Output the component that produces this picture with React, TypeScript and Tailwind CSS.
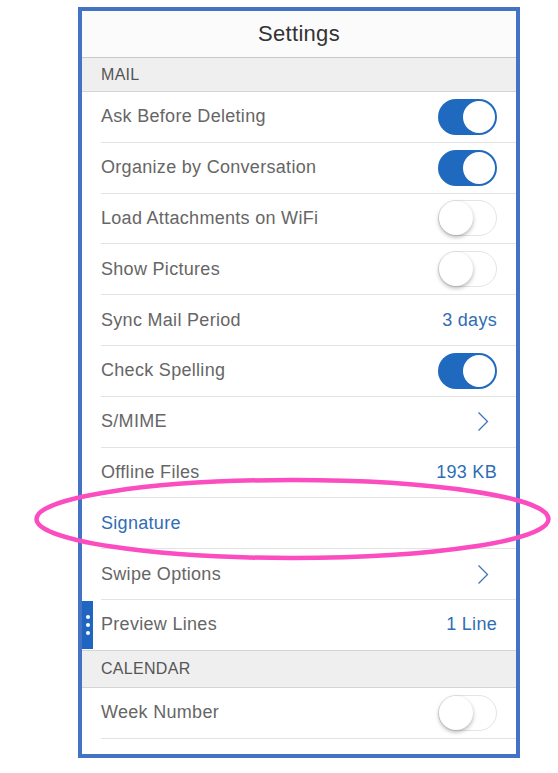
import { ReactNode } from 'react';

type Row = {
  label: string;
  kind: 'on' | 'off' | 'value' | 'chevron' | 'link';
  value?: string;
};

const mailRows: Row[] = [
  { label: 'Ask Before Deleting', kind: 'on' },
  { label: 'Organize by Conversation', kind: 'on' },
  { label: 'Load Attachments on WiFi', kind: 'off' },
  { label: 'Show Pictures', kind: 'off' },
  { label: 'Sync Mail Period', kind: 'value', value: '3 days' },
  { label: 'Check Spelling', kind: 'on' },
  { label: 'S/MIME', kind: 'chevron' },
  { label: 'Offline Files', kind: 'value', value: '193 KB' },
  { label: 'Signature', kind: 'link' },
  { label: 'Swipe Options', kind: 'chevron' },
  { label: 'Preview Lines', kind: 'value', value: '1 Line' },
];

// last row is cut by the frame, only the top of its chevron shows
const calendarRows: Row[] = [
  { label: 'Week Number', kind: 'off' },
  { label: '', kind: 'chevron' },
];

const Toggle = ({ on }: { on: boolean }) =>
  on ? (
    <div className="flex h-[36px] w-[59px] items-center justify-end rounded-full bg-[#1f69bf] pr-[2px]">
      <div className="h-[32px] w-[32px] rounded-full bg-white" />
    </div>
  ) : (
    <div className="flex h-[36px] w-[59px] items-center rounded-full border border-[#e4e4e4] bg-white">
      <div className="h-[34px] w-[34px] rounded-full bg-white shadow-[0_2px_4px_rgba(0,0,0,0.3)]" />
    </div>
  );

const Chevron = () => (
  <svg width="12" height="21" viewBox="0 0 12 21" className="mr-[8px]">
    <polyline points="1.5,1.5 10.5,10.5 1.5,19.5" fill="none" stroke="#3f74b8" strokeWidth="1.3" />
  </svg>
);

const SettingRow = ({ row }: { row: Row }) => {
  let right: ReactNode = null;
  if (row.kind === 'on') right = <Toggle on />;
  if (row.kind === 'off') right = <Toggle on={false} />;
  if (row.kind === 'value') right = <span className="text-[#2f6db5]">{row.value}</span>;
  if (row.kind === 'chevron') right = <Chevron />;

  return (
    <div className="bg-white pl-[19px]">
      <div className="flex h-[50.8px] shrink-0 items-center justify-between border-b border-[#e3e3e3] pr-[19px]">
        <span className={row.kind === 'link' ? 'text-[#2f6db5]' : 'text-[#666]'}>{row.label}</span>
        {right}
      </div>
    </div>
  );
};

const SectionHeader = ({ title, h }: { title: string; h: string }) => (
  <div className={`flex ${h} shrink-0 items-center border-b border-[#d4d4d4] bg-[#efefef] pl-[19px] text-[16px] text-[#555]`}>
    {title}
  </div>
);

export default function App() {
  return (
    <div
      className="relative h-[773px] w-[558px] overflow-hidden bg-white pl-[78px] pt-[7px]"
      style={{ fontFamily: '"Liberation Sans", Arial, sans-serif' }}
    >
      <div className="relative flex h-[751px] w-[442px] flex-col overflow-hidden border-4 border-[#4472c4] text-[18px] tracking-[0.3px]">
        <div className="flex h-[47px] shrink-0 items-center justify-center border-b border-[#c9c9c9] bg-[#fbfbfb] pb-[2px] text-[22px] text-[#333]">
          Settings
        </div>
        <SectionHeader title="MAIL" h="h-[34px]" />
        {mailRows.map((r) => (
          <SettingRow key={r.label} row={r} />
        ))}
        <div className="-mt-px border-t border-[#d4d4d4]" />
        <SectionHeader title="CALENDAR" h="h-[37px]" />
        {calendarRows.map((r, i) => (
          <SettingRow key={i} row={r} />
        ))}

        {/* side handle */}
        <div className="absolute left-0 top-[590px] flex h-[48px] w-[11px] flex-col items-center justify-center gap-[4px] bg-[#2065c0]">
          <div className="h-[4px] w-[4px] rounded-full bg-white" />
          <div className="h-[4px] w-[4px] rounded-full bg-white" />
          <div className="h-[4px] w-[4px] rounded-full bg-white" />
        </div>
      </div>

      {/* highlight ring */}
      <svg className="pointer-events-none absolute left-0 top-0" width="558" height="773">
        <ellipse cx="292.5" cy="519" rx="256" ry="39" fill="none" stroke="#fb4cc0" strokeWidth="4.5" />
      </svg>
    </div>
  );
}
